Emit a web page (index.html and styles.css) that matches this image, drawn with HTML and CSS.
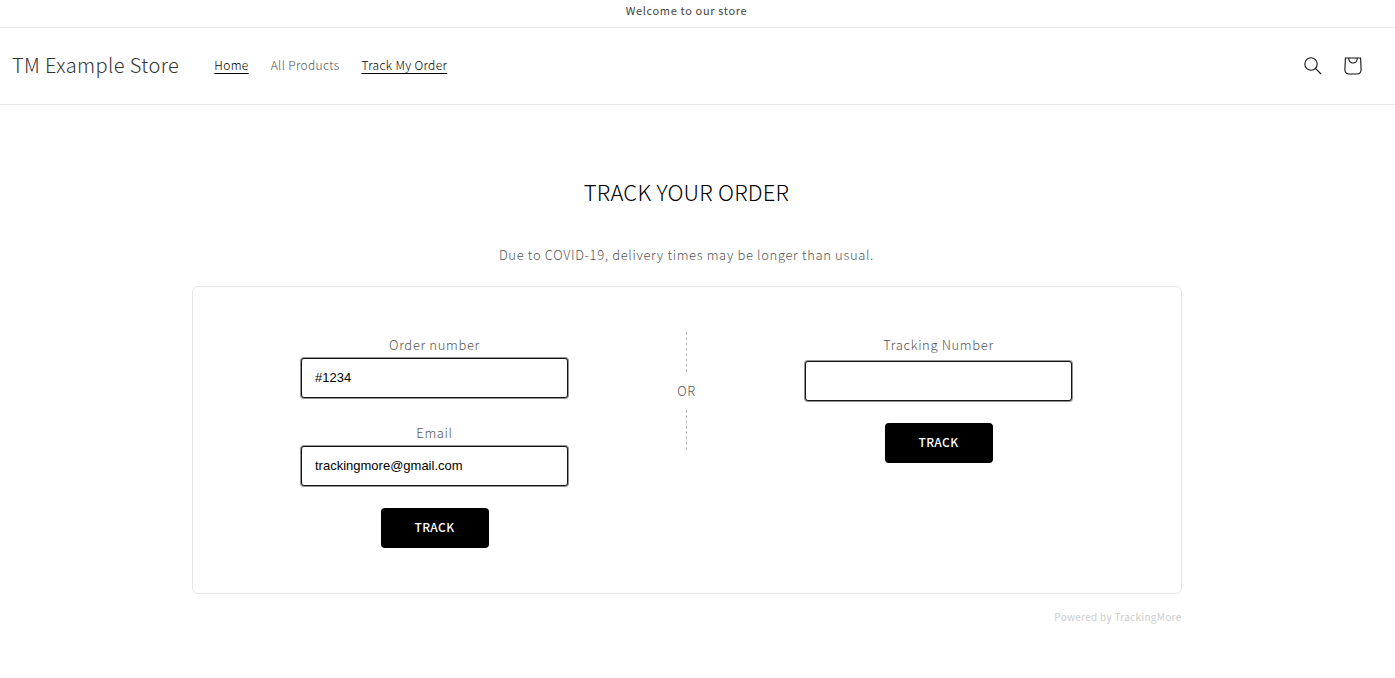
FILE: index.html
```html
<!DOCTYPE html>
<html lang="en">
<head>
  <meta charset="UTF-8" />
  <meta name="viewport" content="width=device-width, initial-scale=1.0" />
  <title>Track Your Order</title>
  <link rel="stylesheet" href="styles.css">
</head>
<body>
  <div class="announcement">Welcome to our store</div>
  <header class="header">
    <a class="logo" href="#">TM Example Store</a>
    <nav class="menu">
      <a class="active" href="#">Home</a>
      <a href="#">All Products</a>
      <a class="active" href="#">Track My Order</a>
    </nav>
    <div class="icons">
      <button type="button" aria-label="Search">
        <svg width="18" height="18" viewBox="0 0 18 18" fill="none" stroke="#121212" stroke-width="1.1">
          <circle cx="7" cy="7" r="6.2" />
          <path d="M11.4 11.4L17 17" />
        </svg>
      </button>
      <button type="button" aria-label="Cart">
        <svg width="18" height="18" viewBox="0 0 18 18" fill="none" stroke="#121212" stroke-width="1.1">
          <path d="M1.4 1h15.2l.5 11.8a4 4 0 0 1-4 4.2H4.9a4 4 0 0 1-4-4.2z" />
          <path d="M4.8 1v.8a4.2 4.2 0 0 0 8.4 0V1" />
        </svg>
      </button>
    </div>
  </header>

  <main class="track">
    <h1>TRACK YOUR ORDER</h1>
    <p class="notice">Due to COVID-19, delivery times may be longer than usual.</p>
    <div class="card">
      <form class="form">
        <div class="field">
          <label for="order">Order number</label>
          <input type="text" id="order" value="#1234">
        </div>
        <div class="field">
          <label for="email">Email</label>
          <input type="email" id="email" value="trackingmore@gmail.com">
        </div>
        <button type="button">TRACK</button>
      </form>
      <div class="divider"><span>OR</span></div>
      <form class="form">
        <div class="field spaced">
          <label for="number">Tracking Number</label>
          <input type="text" id="number">
        </div>
        <button type="button">TRACK</button>
      </form>
    </div>
    <div class="powered">Powered by <a href="#">TrackingMore</a></div>
  </main>
</body>
</html>
```
FILE: styles.css
```css
:root {
  --text: #121212;
  --text-muted: #555;
  --border: #e7e7e7;
  --gutter: 22px;
}
* {
  margin: 0;
  padding: 0;
  box-sizing: border-box;
}
body {
  background: #fff;
  color: var(--text-muted);
  font-family: "Noto Sans CJK SC", "Open Sans", sans-serif;
  font-size: 13px;
  font-weight: 300;
  line-height: 26px;
  letter-spacing: 0.05em;
}
a {
  color: inherit;
  text-decoration: none;
}
button {
  border: none;
  cursor: pointer;
}

.announcement {
  padding: 0 var(--gutter) 6px 0;
  border-bottom: 1px solid var(--border);
  color: #444;
  font-size: 11px;
  font-weight: 400;
  line-height: 21px;
  text-align: center;
}

.header {
  display: flex;
  align-items: center;
  height: 77px;
  padding: 0 33px 0 12px;
  border-bottom: 1px solid var(--border);
}
.logo {
  margin-right: 35px;
  padding-bottom: 2px;
  color: #333;
  font-size: 20px;
  letter-spacing: 0.02em;
}
.menu {
  display: flex;
  flex: 1;
  gap: 22px;
  padding-bottom: 2px;
  font-size: 12px;
  letter-spacing: 0.03em;
}
.menu .active {
  color: #000;
  text-decoration: underline;
  text-underline-offset: 3px;
}
.icons {
  display: flex;
  gap: 22px;
}
.icons button {
  display: flex;
  background: none;
}

.track {
  max-width: 1012px;
  margin: 0 auto;
  padding: 68px var(--gutter) 40px 0;
  text-align: center;
}
.track h1 {
  margin-bottom: 33px;
  color: #000;
  font-size: 22px;
  font-weight: 300;
  line-height: 36px;
  letter-spacing: 0.01em;
}
.notice {
  margin-bottom: 18px;
}
.card {
  display: grid;
  grid-template-columns: 1fr 20px 1fr;
  padding: 45px 0;
  border: 1px solid var(--border);
  border-radius: 6px;
}
.form {
  display: flex;
  flex-direction: column;
  align-items: center;
  gap: 22px;
}
.field {
  display: flex;
  flex-direction: column;
  width: 267px;
}
.field.spaced {
  gap: 3px;
}
.field input {
  height: 40px;
  padding: 0 13px 2px;
  border: 1px solid var(--text);
  border-radius: 3px;
  box-shadow: 0 0 0 1px rgba(18, 18, 18, 0.45);
  color: #000;
  font: 13px "Liberation Sans", sans-serif;
}
.form button {
  width: 108px;
  height: 40px;
  padding-bottom: 3px;
  border-radius: 4px;
  background: #000;
  color: #fff;
  font-family: inherit;
  font-size: 12px;
  font-weight: 500;
  letter-spacing: 0.03em;
}
.divider {
  display: flex;
  flex-direction: column;
  align-items: center;
  gap: 6px;
}
.divider::before,
.divider::after {
  content: "";
  height: 40px;
  border-left: 1px dashed #bbb;
}
.powered {
  margin-top: 10px;
  color: #ccc;
  font-size: 10px;
  font-weight: 400;
  letter-spacing: 0.03em;
  text-align: right;
}
```
